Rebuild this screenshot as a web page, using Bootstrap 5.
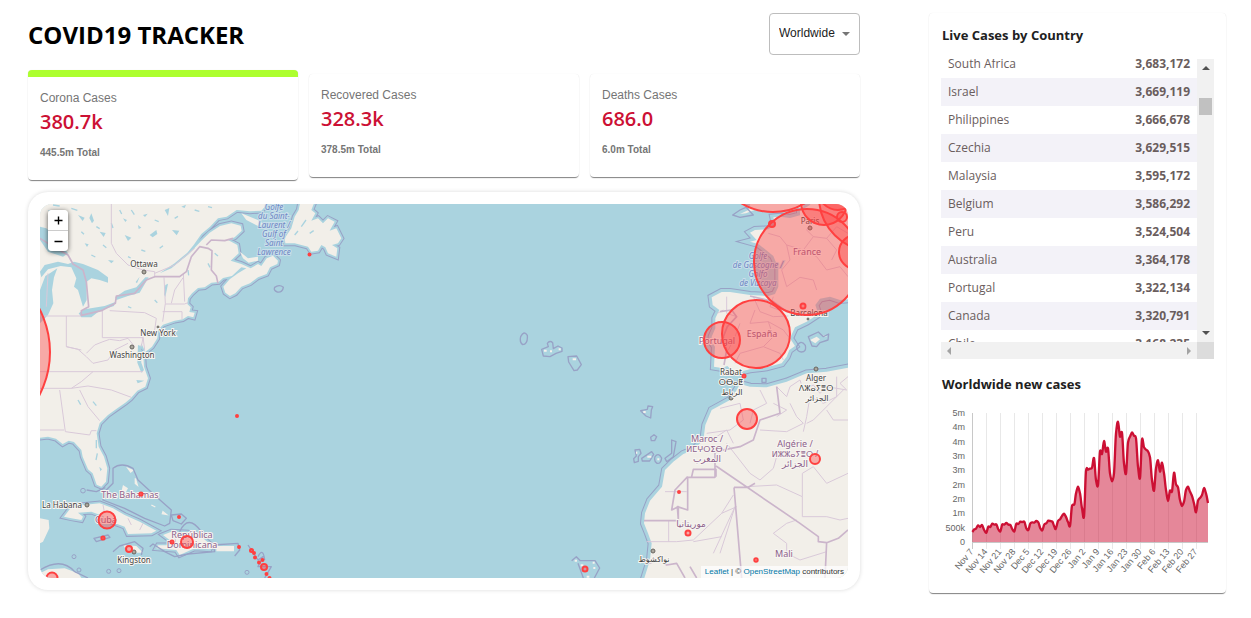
<!DOCTYPE html>
<html lang="en">
<head>
<meta charset="utf-8">
<meta name="viewport" content="width=device-width, initial-scale=1">
<title>COVID19 Tracker</title>
<link href="https://cdn.jsdelivr.net/npm/bootstrap@5.3.0/dist/css/bootstrap.min.css" rel="stylesheet">
<style>
  body { font-family: "Liberation Sans", Arial, sans-serif; color: #212121; background: #fff; }
  .app { padding: 13px 25px 24px 28px; gap: 69px; }
  .side { width: 297px; flex: none; }
  .humanist { font-family: "Open Sans", "Noto Sans", sans-serif; }
  .app-title { font-size: 24px; line-height: 28px; font-weight: 700; color: #000; margin-top: 8px; }
  .picker { width: 91px; height: 42px; }
  .picker select { appearance: none; width: 100%; height: 100%; border: 1px solid #bdbdbd; border-radius: 4px; background: #fff; font-size: 12px; line-height: 18px; padding: 0 20px 2px 9px; color: #212121; }
  .picker svg { position: absolute; right: 10px; top: 19px; pointer-events: none; }
  .paper { background: #fff; border-radius: 4px; box-shadow: 0 2px 1px -1px rgba(0,0,0,.35), 0 1px 1px 0 rgba(0,0,0,.2), 0 0 1px 0 rgba(0,0,0,.1); }
  .stats { gap: 11px; height: 110px; margin-top: 15px; }
  .stat { flex: 1 1 0; padding: 12px 12px 20px; border: 0; text-align: left; color: inherit; }
  .stat.active { border-top: 7px solid #adff2f; }
  .stat-label { font-size: 12px; line-height: 18px; color: #757575; }
  .stat-value { font-size: 20px; line-height: 30px; font-weight: 600; color: #cc1034; margin: 0; }
  .stat-total { font-size: 10px; line-height: 14px; font-weight: 700; color: #757575; margin-top: 9px; }
  .map-card { margin-top: 12px; padding: 12px; border-radius: 20px; background: #fff; box-shadow: 0 0 4px rgba(0,0,0,.15); }
  .map-box { border-radius: 12px; overflow: hidden; background: #aad3df; }
  .map-box > svg { display: block; width: 100%; height: 374px; }
  .zoomer { left: 8px; top: 6px; width: 20px; border-radius: 4px; box-shadow: 0 1px 5px rgba(0,0,0,.65); overflow: hidden; }
  .zoomer button { border: 0; background: #fff; width: 20px; height: 20px; padding: 0; display: grid; place-items: center; }
  .zoomer button + button { border-top: 1px solid #ccc; height: 21px; }
  .attribution { right: 0; bottom: 0; background: rgba(255,255,255,.7); font-size: 8px; line-height: 12px; padding: 0 4px; color: #333; }
  .attribution a { color: #0078a8; text-decoration: none; }
  .side-card { padding: 12px 12px 3px 13px; }
  .side-title { font-size: 13px; line-height: 20px; font-weight: 700; margin: 0; color: #212121; }
  .side-title.second { margin-top: 15px; }
  .scroller { margin-top: 14px; display: grid; grid-template-columns: minmax(0,1fr) 17px; grid-template-rows: 283px 17px; margin-left: -1px; }
  .cases { width: 100%; margin: -9px 0 0; border-collapse: collapse; font-size: 12px; line-height: 16px; color: #6a5d5d; }
  .cases th, .cases td { padding: 6px 7px; height: 28px; }
  .cases th { font-weight: 400; }
  .cases td { text-align: right; font-weight: 700; }
  .cases tr:nth-child(even) { background: #f3f2f8; }
  .bar { background: #f1f1f1; }
  .thumb { width: 13px; height: 17px; background: #c1c1c1; margin-bottom: 188px; }
  .bar-corner { background: #dcdcdc; }
  .chart { display: block; width: 100%; height: 190px; margin-top: 6px; }
  .land path, .isles path { stroke-linejoin: round; }
  .admin path { fill: none; stroke: #d9c9d9; stroke-width: 3; stroke-linejoin: round; }
  .nation path { fill: none; stroke: #cbb5cb; stroke-width: 5; stroke-linejoin: round; }
  .lakes path { fill: #aad3df; }
  .ring path { fill: none; stroke: #98a2c6; stroke-width: 4; stroke-linejoin: round; }
  .places { font: 8px "Noto Sans", "DejaVu Sans", sans-serif; fill: #444; text-anchor: middle; paint-order: stroke; stroke: #f7f5f1; stroke-width: 2px; }
  .places .country { fill: #8d618b; font-size: 9px; }
  .places .native { font-size: 8px; }
  .places .sea { fill: #6d86c4; font-style: italic; font-size: 8px; stroke: #c9dfea; }
  .cases-dots circle { fill: #ff4040; fill-opacity: .4; stroke: #ff4040; stroke-width: 2; }
</style>
</head>
<body>
<div class="app d-flex align-items-start">
  <main class="flex-grow-1" style="min-width:0">
    <header class="d-flex justify-content-between align-items-start">
      <h1 class="app-title humanist mb-0">COVID19 TRACKER</h1>
      <div class="picker position-relative">
        <label class="visually-hidden" for="country">Country</label>
        <select id="country"><option>Worldwide</option></select>
        <svg width="8" height="4" aria-hidden="true"><path d="M0 0h8l-4 4z" fill="#757575"/></svg>
      </div>
    </header>

    <section class="stats d-flex align-items-center">
      <button type="button" class="stat paper active">
        <div class="stat-label">Corona Cases</div>
        <div class="stat-value humanist">380.7k</div>
        <div class="stat-total">445.5m Total</div>
      </button>
      <button type="button" class="stat paper">
        <div class="stat-label">Recovered Cases</div>
        <div class="stat-value humanist">328.3k</div>
        <div class="stat-total">378.5m Total</div>
      </button>
      <button type="button" class="stat paper">
        <div class="stat-label">Deaths Cases</div>
        <div class="stat-value humanist">686.0</div>
        <div class="stat-total">6.0m Total</div>
      </button>
    </section>

    <section class="map-card">
      <div class="map-box position-relative">
        <svg viewBox="40 204 808 374" preserveAspectRatio="xMidYMid slice" role="img" aria-label="Map of cases">
          <defs>
            <path id="america" d="M20 20H735L721 39 700 62 666 64 626 60 596 80 570 85 546 110 520 132 497 165 478 188 440 220 395 250 430 235 482 193 520 152 545 128 576 108 610 100 638 107 641 122 620 142 600 150 628 165 632 190 608 212 640 222 668 235 690 222 700 228 716 205 735 197 750 212 748 222 726 232 716 252 690 262 666 280 640 290 622 310 606 318 592 308 586 290 605 268 630 250 655 235 640 232 612 258 585 264 572 276 550 278 530 292 510 294 492 310 480 325 478 342 488 352 484 366 500 368 496 382 480 378 464 388 440 392 405 404 390 420 388 445 372 470 352 486 340 460 334 480 346 500 348 530 360 565 352 590 328 602 308 625 292 638 268 655 240 675 215 700 206 730 212 770 228 800 238 835 234 875 220 890 206 884 194 850 180 838 164 800 160 780 138 756 122 752 104 762 84 746 60 740 20 745Z"/>
            <path id="newfoundland" d="M820 20 812 60 800 80 790 115 770 145 772 160 800 160 840 170 850 185 870 182 880 165 892 172 900 190 925 200 928 175 912 165 930 160 940 145 925 115 905 122 920 95 900 85 885 100 870 85 850 92 862 70 850 60 862 30Z"/>
            <path id="cuba" d="M108 980 125 958 165 945 215 940 255 955 290 975 335 995 385 1022 370 1030 300 1032 290 1010 250 995 225 978 190 965 150 968 165 980 160 990 130 985Z"/>
            <path id="hispaniola" d="M405 1035 430 1025 480 1028 520 1040 550 1066 545 1078 500 1075 455 1095 445 1080 385 1075 390 1066 425 1066 425 1050Z"/>
            <path id="europe" d="M640 20H520L510 45 480 62 480 76 450 84 420 80 400 82 405 105 385 118 345 120 330 128 350 150 330 155 355 162 378 180 400 198 415 235 415 290 405 312 385 318 330 315 270 306 245 306 215 322 218 345 238 360 226 385 226 415 215 440 215 455 225 470 222 530 245 534 262 528 275 540 300 545 330 538 380 532 425 520 440 500 448 480 465 468 450 445 465 412 500 395 535 372 526 345 540 326 570 320 600 330 640 326Z"/>
            <path id="africa" d="M640 530 560 545 500 550 440 575 380 592 330 590 300 582 290 600 270 630 215 660 196 705 190 750 160 780 130 792 100 815 75 840 66 890 30 932 15 970 12 1000 24 1030 35 1060 30 1110 8 1180H640Z"/>
          </defs>

          <!-- western Atlantic -->
          <g transform="translate(28 190) scale(.333333)">
            <g class="land" fill="none" stroke="#98a2c6" stroke-width="17"><use href="#america"/><use href="#newfoundland"/><use href="#cuba"/><use href="#hispaniola"/></g>
            <g class="land" fill="#f2efe9" stroke="#aad3df" stroke-width="11"><use href="#america"/><use href="#newfoundland"/><use href="#cuba"/><use href="#hispaniola"/></g>
            <g fill="#f2efe9">
              <use href="#america"/><use href="#newfoundland"/>
              <path d="M640 70 690 90 712 105 690 108 655 90ZM636 185 660 205 690 200 690 212 662 218 645 205Z"/>
              <path d="M36 985 62 990 64 1015 45 1055 36 1060ZM36 1150 60 1138 110 1135 150 1150 165 1170H36ZM285 1065 325 1068 345 1088 300 1088ZM565 1068H618V1084H565ZM285 885 300 895 292 910 280 905Z"/>
              <path d="M300 835l14 6-6 5zM322 865l6 20-6-5zM370 945l12 6zM405 965l10 8-12-2z" stroke="#f2efe9" stroke-width="4"/>
            </g>
            <g class="lakes">
              <path d="M36 110 55 115 90 150 120 190 105 200 60 185 36 150ZM36 245 50 225 90 215 120 222 138 215 165 222 210 240 240 262 240 278 215 270 190 265 176 275 176 330 165 350 150 300 138 290 145 265 130 232 98 228 60 238 40 262ZM52 258 68 248 88 235 78 262 72 300 76 340 60 375 36 400V300ZM152 370 170 358 230 348 262 336 258 348 215 362 190 382 160 382ZM262 322 290 302 325 292 352 262 362 262 335 308 300 318 265 330Z"/>
              <path d="M190 70l8 22-6 8-8-16zM215 125l18 4-6 12zM290 135l20 8-10 10zM365 135l20-15 3 12-14 10zM330 105l10 8-8 4zM432 120l22 2-8 14zM410 60l14-6-4 24zM150 75l20 8-6 10zM100 70l16 3-6 8zM285 85l12 5-5 6zM345 75l14-4-8 10zM240 210l18 2-8 8zM170 160l12 3-5 8zM60 60l14 4-8 5zM460 50l14-6-4 10zM335 260l-8 20-4-4zM412 285l8-4-8 40-4-8zM330 465l8 3 2 50 8 22-8 8-12-30zM325 570l24 2-20 8zM214 830l8 8-5 6z"/>
              <path d="M75 45l20 3M130 55l18 6M205 110l10 6M250 100l5 14M310 60l9 14M380 90l12 5M395 175l10-8M340 180l12 4M275 60l6 12M440 85l10-6M500 60l14 4M540 50l12 3M560 190l10 8M540 220l6 12M300 200l8 4M190 195l12 6M90 100l10 7M160 125l8 8M225 165l10 8M480 240l2 16" stroke="#aad3df" stroke-width="4"/>
              <path d="M205 750v25M208 790l-4 20M150 630l8 14M195 635l10 12M380 330l8 8M300 350l10 4M820 110l14-20M845 130l12-8M800 135l10-12" stroke="#aad3df" stroke-width="4"/>
            </g>
            <use href="#cuba" fill="#f2efe9"/><use href="#hispaniola" fill="#f2efe9"/>
            <g class="admin">
              <path d="M250 39V160L265 190 300 225 345 240 380 245V262M380 250 440 225 500 175M36 378H160M115 378V470L160 480M223 362V443H345L340 470M245 362 350 368 385 385 380 420M408 262 412 340 404 395M412 342H470L480 338M404 365H462V388M466 262 440 300 430 340M466 250 470 335M36 545H345M130 595 160 575 195 545M36 595H130L180 588 250 600 310 622M95 600 112 725 185 735 190 722H205M36 720H108M155 600 180 650 215 692M175 490 200 465 225 455 245 448 275 452 300 445 320 470M115 470 150 478 175 500 195 520 240 510 260 480 300 460M345 440 350 480M60 250 55 350M345 1000 335 1020M300 985 310 1005M225 945 230 970M440 1030 445 1075"/>
            </g>
            <g class="nation"><path d="M36 145 60 160 120 195 135 222 165 240 175 275 182 350 160 362 160 376 220 362 262 340 265 318 320 310 355 270 380 260H455L475 245 490 200 515 170 540 175 552 182 550 240 565 258 570 280M535 165 550 150 590 152 615 145"/></g>
            <g class="ring">
              <path d="M740 292q14-10 26 0-2 16-18 14-12-4-8-14ZM255 880V835Q280 815 315 835L330 870 385 920 430 960 425 1000 410 1008 350 985 290 955 225 930 225 910ZM430 975 460 972 475 985 460 1002 435 992ZM255 1085 275 1068 320 1055 345 1075 340 1095M198 1045 240 1035 246 1042 205 1055ZM365 1070 375 1062 410 1085 440 1100 480 1092 560 1085 555 1065 630 1060 635 1080 620 1098M455 1025Q480 970 520 1025M660 1065 690 1110 705 1100 690 1130 730 1130 710 1164M690 1100Q705 1070 710 1110M36 1140Q100 1100 140 1145L180 1164"/>
              <circle cx="138" cy="1100" r="6" fill="none" stroke="#98a2c6" stroke-width="3"/><circle cx="242" cy="1144" r="6" fill="none" stroke="#98a2c6" stroke-width="3"/><circle cx="273" cy="1142" r="6" fill="none" stroke="#98a2c6" stroke-width="3"/><circle cx="657" cy="1147" r="6" fill="none" stroke="#98a2c6" stroke-width="3"/><circle cx="153" cy="1140" r="6" fill="none" stroke="#98a2c6" stroke-width="3"/><circle cx="165" cy="902" r="7" fill="none" stroke="#98a2c6" stroke-width="3"/>
              <path d="M176 900 205 905 232 893"/>
            </g>
          </g>

          <!-- eastern Atlantic, Europe and Africa -->
          <g transform="translate(640 190) scale(.333333)">
            <g class="land" fill="none" stroke="#98a2c6" stroke-width="24"><use href="#europe"/><use href="#africa"/></g>
            <g class="land" fill="#f2efe9" stroke="#aad3df" stroke-width="18"><use href="#europe"/><use href="#africa"/></g>
            <use href="#europe" fill="#f2efe9"/><use href="#africa" fill="#f2efe9"/>
            <path d="M300 72 325 60 335 30H490V50L440 62 400 64 350 58 318 70ZM510 450l20-10 10 8-14 12zM545 438l12-4 3 6z" fill="#f2efe9"/>
            <g class="admin">
              <path d="M385 130 420 140 440 165 490 180 520 140 560 145 590 110 624 130M440 165 450 210 425 240 440 290 480 262 520 270 530 300M490 180 530 200 560 240 600 230 624 260M520 90 500 120 520 140M560 145 590 180 575 210M260 320V370L290 380M340 320 360 365 400 380 445 378M400 320 390 350 430 365M345 360 330 400 385 395 400 440 370 470 300 490 285 520M385 395 430 420 445 440M300 400 285 440 265 480M370 470 420 490 430 510M250 360 232 370"/>
              <path d="M624 560 600 580 620 600 560 590 540 610 520 585 490 600 480 570 450 590 440 620 410 590M590 560V620L550 640 510 620M240 655 300 640 310 690 270 720 200 730M360 600 380 640 340 660 330 700M400 640 440 660 410 680M450 640 470 680 490 700 440 725 360 720M510 620 500 680 490 725M500 700 520 690 610 600M560 660 580 690 624 690M215 750 260 720 280 760M260 760 330 850 360 870 400 835 410 800M320 890 410 885 487 920V850L520 830 560 880 624 850M487 920V980M487 980H560L600 990 624 985M75 905H140M110 1055H20M86 990V1055M110 1055 160 1050 245 970 280 915M245 970 290 950M240 1090 285 950 220 1090M160 1055 245 1040M400 1030 440 1000 470 990M400 1030 440 1060V1090L480 1110 560 1085"/>
            </g>
            <g class="nation"><path d="M240 365 275 360 290 380 262 410 250 440 260 480 252 525M330 318 400 335 440 365 480 375M410 590 420 670 360 690 350 720 340 750 300 770 225 785V862H143V960L112 950 115 990M12 992H115V950L95 960 105 900 143 860M228 828 480 1000 535 1040V1055L560 1058 595 1045 624 1020M282 892H325L345 880M282 892 305 1164M560 1055 555 1164M228 860V838H160L155 860M25 1120 60 1110 80 1125 110 1120 135 1164M150 1130 170 1164"/></g>
            <g class="ring">
              <path d="M278 75 300 60 318 52 340 75 300 82ZM470 470q12-24 26-4 4 20-12 20-14-2-14-16ZM505 440l30-14 15 14 16-8-2 18-24 8-10 12-14-2zM366 565h12v12h-12z"/>
              <path d="M-358 440q10-20 20-4 2 26-14 28-10-6-6-24ZM-295 478 -275 470-278 460q8-10 16-2l2 18 14-8 12 6 0 10-18 6-18 10-20-2ZM-216 500l26-2 14 26-12 16-10 2-16-26ZM2 662l20-4 2-10 14 2-4 10-2 24-14-6ZM32 742l10-8 8 6-6 12-10 0ZM-15 780l14-2 4 12-8 10 0 14-12 4-2-12 8-8ZM5 805l30-20 6 8-12 20-22 0ZM45 800q10-14 20 4-2 18-14 16-10-6-6-20ZM75 805 95 790 95 750 108 755 100 800 80 815ZM-205 1112l14-12 12 12 44 0 14 22-16 30M-186 1120-170 1164"/>
            </g>
            <path d="M-288 482h8M-270 484h6M-244 478h6M-202 508h10M10 666h7M22 800h12M52 808h6M-12 788h4M-196 1112h7M-178 1126h8M-142 1118h6M-140 1134h6M-160 1160h8" stroke="#f6f1ed" stroke-width="6"/>
          </g>

          <g fill="#aaa69c" stroke="#69655f" stroke-width="1"><circle cx="144" cy="272" r="2"/><circle cx="132" cy="347" r="2"/><circle cx="158" cy="327" r="1"/><circle cx="87" cy="505" r="2"/><circle cx="134" cy="552" r="2"/><circle cx="810" cy="228" r="2"/><circle cx="731" cy="398" r="2"/><circle cx="816" cy="369" r="2"/><circle cx="653" cy="551" r="2"/><circle cx="808" cy="319" r="1"/></g>
          <g class="places">
            <text x="144" y="267">Ottawa</text><text x="158" y="336">New York</text><text x="132" y="358">Washington</text>
            <text x="62" y="508">La Habana</text><text x="134" y="563">Kingston</text>
            <text x="810" y="224">Paris</text><text x="809" y="316">Barcelona</text>
            <text x="731" y="375">Rabat</text><text x="731" y="385">ⵔⴱⴰⵟ</text><text x="732" y="395">الرباط</text>
            <text x="816" y="381">Alger</text><text x="816" y="391">ⴷⵣⴰⵢⴻⵔ</text><text x="817" y="401">الجزائر</text>
            <text x="654" y="562">نواكشوط</text>
            <g class="country">
              <text x="130" y="498">The Bahamas</text><text x="106" y="523">Cuba</text>
              <text x="192" y="538">República</text><text x="192" y="548">Dominicana</text>
              <text x="807" y="255">France</text><text x="762" y="337">España</text><text x="717" y="344">Portugal</text>
              <text x="707" y="442">Maroc /</text><text class="native" x="707" y="452">ⵍⵎⵖⵔⵉⴱ /</text><text x="707" y="462">المغرب</text>
              <text x="795" y="447">Algérie /</text><text class="native" x="795" y="457">ⵍⵣⵣⴰⵢⴻⵔ /</text><text x="795" y="467">الجزائر</text>
              <text x="691" y="527">موريتانيا</text><text x="784" y="557">Mali</text>
            </g>
            <text class="sea" x="274" y="210">Golfe</text><text class="sea" x="274" y="219">du Saint-</text><text class="sea" x="274" y="228">Laurent /</text><text class="sea" x="274" y="237">Gulf of</text><text class="sea" x="274" y="246">Saint</text><text class="sea" x="274" y="255">Lawrence</text>
            <text class="sea" x="758" y="259">Golfe</text><text class="sea" x="758" y="268">de Gascogne /</text><text class="sea" x="758" y="277">Golfo</text><text class="sea" x="758" y="286">de Vizcaya</text>
          </g>
          <g class="cases-dots">
            <circle cx="-43" cy="352" r="93"/><circle cx="807" cy="262" r="53"/><circle cx="756" cy="334" r="34"/><circle cx="722" cy="340" r="18"/>
            <circle cx="773" cy="151" r="61"/><circle cx="824" cy="202" r="23"/><circle cx="838" cy="190" r="20"/><circle cx="873" cy="197" r="54"/><circle cx="842" cy="217" r="5"/><circle cx="856" cy="252" r="17"/>
            <circle cx="747" cy="419" r="10"/><circle cx="815" cy="459" r="5"/><circle cx="772" cy="224" r="3"/><circle cx="803" cy="306" r="2.5"/><circle cx="744" cy="376" r="1.5"/>
            <circle cx="309.5" cy="254.5" r="1"/><circle cx="237" cy="416" r="1"/><circle cx="679" cy="492" r="1"/><circle cx="688" cy="533" r="2.5"/><circle cx="756" cy="560" r="1.7"/><circle cx="585" cy="569" r="2.5"/>
            <circle cx="107" cy="520" r="8.5"/><circle cx="141" cy="494" r="1.6"/><circle cx="179" cy="517" r="1"/><circle cx="103" cy="538" r="1.6"/><circle cx="129" cy="549" r="3"/><circle cx="187" cy="542" r="6"/><circle cx="172" cy="542" r="1.5"/>
            <circle cx="239" cy="547" r="1"/><circle cx="251.500" cy="550.500" r="1.5"/><circle cx="254" cy="553" r="1"/><circle cx="255" cy="557.500" r="1"/><circle cx="259" cy="562.500" r="1"/><circle cx="262.500" cy="560" r="1"/><circle cx="264" cy="567" r="3"/><circle cx="266.500" cy="574" r="1"/><circle cx="269.500" cy="578" r="1"/><circle cx="52" cy="578" r="5.500"/>
          </g>
        </svg>
        <div class="zoomer position-absolute">
          <button type="button" aria-label="Zoom in"><svg width="9" height="9" aria-hidden="true"><path d="M4.500 .5v8M.5 4.500h8" stroke="#000" stroke-width="1.400"/></svg></button>
          <button type="button" aria-label="Zoom out"><svg width="9" height="9" aria-hidden="true"><path d="M.5 4.500h8" stroke="#000" stroke-width="1.400"/></svg></button>
        </div>
        <div class="attribution position-absolute"><a href="#">Leaflet</a> | © <a href="#">OpenStreetMap</a> contributors</div>
      </div>
    </section>
  </main>

  <aside class="side paper side-card">
    <h2 class="side-title humanist">Live Cases by Country</h2>
    <div class="scroller">
      <div class="overflow-hidden">
        <table class="cases humanist">
          <tbody>
            <tr><th scope="row">South Africa</th><td>3,683,172</td></tr>
            <tr><th scope="row">Israel</th><td>3,669,119</td></tr>
            <tr><th scope="row">Philippines</th><td>3,666,678</td></tr>
            <tr><th scope="row">Czechia</th><td>3,629,515</td></tr>
            <tr><th scope="row">Malaysia</th><td>3,595,172</td></tr>
            <tr><th scope="row">Belgium</th><td>3,586,292</td></tr>
            <tr><th scope="row">Peru</th><td>3,524,504</td></tr>
            <tr><th scope="row">Australia</th><td>3,364,178</td></tr>
            <tr><th scope="row">Portugal</th><td>3,322,134</td></tr>
            <tr><th scope="row">Canada</th><td>3,320,791</td></tr>
            <tr><th scope="row">Chile</th><td>3,168,235</td></tr>
          </tbody>
        </table>
      </div>
      <div class="bar d-flex flex-column align-items-center justify-content-between py-1">
        <svg width="8" height="8" aria-hidden="true"><path d="M0 7h8L4 3z" fill="#505050"/></svg>
        <div class="thumb"></div>
        <svg width="8" height="8" aria-hidden="true"><path d="M0 1h8L4 5z" fill="#505050"/></svg>
      </div>
      <div class="bar d-flex align-items-center justify-content-between px-1">
        <svg width="8" height="8" aria-hidden="true"><path d="M6 0v8L2 4z" fill="#a3a3a3"/></svg>
        <svg width="8" height="8" aria-hidden="true"><path d="M2 0v8l4-4z" fill="#a3a3a3"/></svg>
      </div>
      <div class="bar-corner"></div>
    </div>
    <h2 class="side-title second humanist">Worldwide new cases</h2>
    <svg class="chart" viewBox="942 400 272 190" role="img" aria-label="Worldwide new cases per day" font-family="Liberation Sans, Arial, sans-serif" font-size="9" fill="#666" text-anchor="end">
      <g id="grid" stroke="#e8e8e8"></g>
      <path d="M972 542.500H1208M972.500 413V549" stroke="#c8c8c8" fill="none"/>
      <g id="ylabels"></g>
      <g id="xlabels"></g>
      <g transform="translate(920 370) scale(.333333)">
        <path id="area" fill="#cc1034" fill-opacity=".5"/>
        <path id="line" fill="none" stroke="#cc1034" stroke-width="7" stroke-linejoin="round"/>
      </g>
    </svg>
  </aside>
</div>
<script src="https://cdn.jsdelivr.net/npm/bootstrap@5.3.0/dist/js/bootstrap.bundle.min.js"></script>
<script>
  const points = "157,486 163,478 168,476 174,466 180,471 186,465 193,481 199,488 205,470 211,471 217,461 223,464 229,463 235,478 241,484 247,463 253,464 259,459 265,464 271,465 277,478 283,484 289,461 295,462 301,455 307,456 313,455 319,475 325,480 331,460 337,457 343,458 349,453 355,457 361,475 367,481 373,463 379,460 385,452 391,453 397,455 403,470 407,477 414,453 420,448 426,438 432,431 438,441 444,456 450,468 456,408 463,403 468,370 474,350 480,370 486,415 492,440 498,303 504,299 510,296 516,293 522,264 528,330 534,346 540,245 546,252 552,213 558,245 564,235 570,310 576,334 582,310 588,190 594,155 600,200 606,188 612,280 618,311 624,218 630,200 636,187 642,197 648,205 654,290 660,324 666,208 672,232 678,239 684,244 690,262 696,330 702,362 708,295 714,271 720,305 726,278 732,310 738,360 744,393 750,362 756,364 762,308 768,343 774,352 780,390 786,408 792,395 798,360 804,350 810,365 816,378 822,400 828,427 834,392 840,384 846,375 852,354 858,370 864,399"
    .split(" ").map(p => p.split(",").map(Number));
  // smooth curve through the daily points
  let curve = "";
  for (let i = 0; i < points.length - 1; i++) {
    const a = points[Math.max(i - 1, 0)], b = points[i], c = points[i + 1], d = points[Math.min(i + 2, points.length - 1)];
    curve += `C${b[0] + (c[0] - a[0]) / 6},${b[1] + (c[1] - a[1]) / 8} ${c[0] - (d[0] - b[0]) / 6},${c[1] - (d[1] - b[1]) / 8} ${c[0]},${c[1]}`;
  }
  document.getElementById("line").setAttribute("d", "M157,486" + curve);
  document.getElementById("area").setAttribute("d", "M157,516L157,486" + curve + "L864,516Z");
  const weeks = ["Nov 7","Nov 14","Nov 21","Nov 28","Dec 5","Dec 12","Dec 19","Dec 26","Jan 2","Jan 9","Jan 16","Jan 23","Jan 30","Feb 6","Feb 13","Feb 20","Feb 27"];
  let grid = "", xl = "", yl = "";
  weeks.forEach((w, i) => {
    const x = 972 + 14 * i;
    grid += `<path d="M${x + .5} 413V549"/>`;
    xl += `<text transform="translate(${x + 2} 552) rotate(-50)">${w}</text>`;
  });
  ["5m","4m","4m","3m","3m","2m","2m","1m","500k","0"].forEach((t, i) => {
    yl += `<text x="965" y="${Math.round(416 + 14.33 * i)}">${t}</text>`;
  });
  document.getElementById("grid").innerHTML = grid;
  document.getElementById("xlabels").innerHTML = xl;
  document.getElementById("ylabels").innerHTML = yl;
</script>
</body>
</html>
